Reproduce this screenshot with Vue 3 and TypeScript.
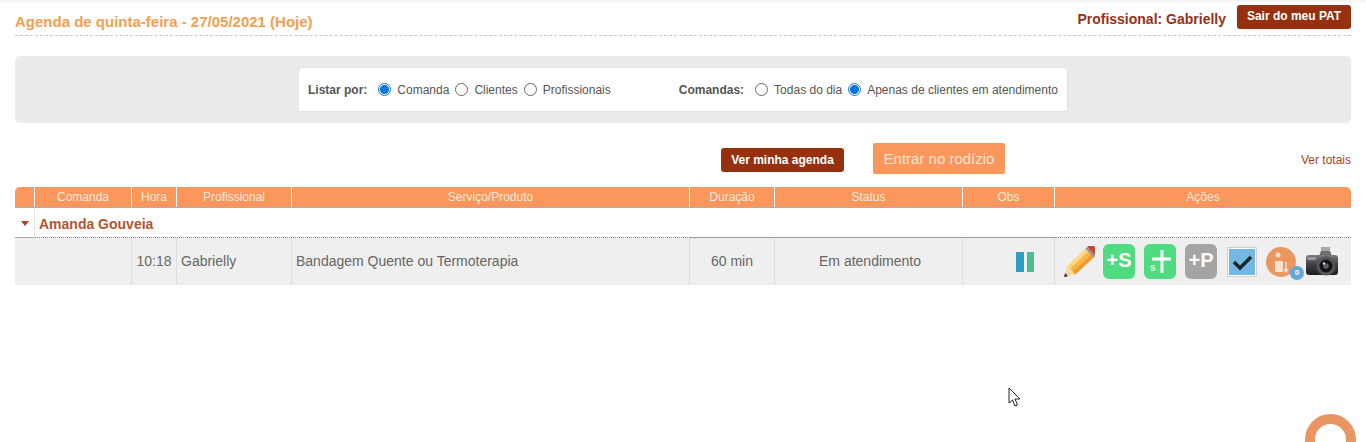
<script setup lang="ts">
const columns: string[] = ['', 'Comanda', 'Hora', 'Profissional', 'Serviço/Produto', 'Duração', 'Status', 'Obs', 'Ações']
</script>

<template>
  <div class="page">
    <header class="top">
      <h1>Agenda de quinta-feira - 27/05/2021 (Hoje)</h1>
      <div class="who">
        <span>Profissional: Gabrielly</span>
        <button class="btn-dark pat">Sair do meu PAT</button>
      </div>
    </header>

    <section class="panel">
      <div class="filters">
        <div class="group">
          <b>Listar por:</b>
          <label><i class="radio on"></i>Comanda</label>
          <label><i class="radio"></i>Clientes</label>
          <label><i class="radio"></i>Profissionais</label>
        </div>
        <div class="group second">
          <b>Comandas:</b>
          <label><i class="radio"></i>Todas do dia</label>
          <label><i class="radio on"></i>Apenas de clientes em atendimento</label>
        </div>
      </div>
    </section>

    <section class="tools">
      <button class="btn-dark agenda">Ver minha agenda</button>
      <button class="btn-rodizio">Entrar no rodízio</button>
      <a class="totais">Ver totais</a>
    </section>

    <section class="table">
      <div class="row head">
        <div v-for="c in columns" :key="c" class="th">{{ c }}</div>
      </div>
      <div class="group-row">
        <div class="caret-cell"><i class="caret"></i></div>
        <div class="gname">Amanda Gouveia</div>
        <div class="solid"></div>
        <div class="dots"></div>
      </div>
      <div class="row body">
        <div class="wide"></div>
        <div class="td center">10:18</div>
        <div class="td">Gabrielly</div>
        <div class="td">Bandagem Quente ou Termoterapia</div>
        <div class="td center">60 min</div>
        <div class="td center status">Em atendimento</div>
        <div class="td obs">
          <svg width="18" height="20" viewBox="0 0 18 20">
            <rect x="0" y="0" width="8" height="20" fill="#2e9fc4" />
            <rect x="11" y="0" width="7" height="20" fill="#4dbd93" />
          </svg>
        </div>
        <div class="td actions">
          <svg class="pencil" width="32" height="32" viewBox="0 0 32 32">
            <g transform="translate(1 31) rotate(-43)">
              <path d="M0 0 L10 -6 V6 Z" fill="#f6d9a8" />
              <path d="M0 0 L3.500 -2.100 V2.100 Z" fill="#3a3230" />
              <rect x="10" y="-6" width="25" height="4" fill="#ffd684" />
              <rect x="10" y="-2" width="25" height="4" fill="#fbb440" />
              <rect x="10" y="2" width="25" height="4" fill="#ee9a2e" />
              <rect x="35" y="-6" width="2.500" height="12" fill="#9b8f86" />
              <path d="M37.500 -6 H39 Q43 -6 43 -2 V2 Q43 6 39 6 H37.500 Z" fill="#c6492f" />
            </g>
          </svg>
          <span class="tile green">+S</span>
          <span class="tile green plus">
            <svg width="32" height="35" viewBox="0 0 32 35">
              <path d="M18 6 V29 M8 15 H27" stroke="#fff" stroke-width="3" fill="none" />
            </svg>
            <small>s</small>
          </span>
          <span class="tile gray">+P</span>
          <span class="check">
            <svg width="26" height="26" viewBox="0 0 26 26">
              <rect x="0" y="0" width="26" height="26" fill="#72b8e2" />
              <path d="M5 13 L11 19 L22 8" stroke="#1c2530" stroke-width="3.500" fill="none" />
            </svg>
          </span>
          <span class="person">
            <svg width="30" height="30" viewBox="0 0 30 30">
              <circle cx="15" cy="15" r="15" fill="#ec965f" />
              <circle cx="12" cy="8" r="2.500" fill="#f8e2d2" />
              <rect x="9" y="14" width="8" height="11" rx="1" fill="#f8e2d2" />
              <path d="M20 15 V24 M18 22 L20 25 L22 22" stroke="#f8e2d2" stroke-width="1.500" fill="none" />
            </svg>
            <em>0</em>
          </span>
          <svg class="camera" width="32" height="30" viewBox="0 0 32 30">
            <defs>
              <linearGradient id="cam" x1="0" y1="0" x2="0" y2="1">
                <stop offset="0" stop-color="#7c7c80" />
                <stop offset="0.500" stop-color="#3e3e42" />
                <stop offset="1" stop-color="#1f1f22" />
              </linearGradient>
            </defs>
            <rect x="15" y="0" width="9" height="4" fill="#a8a8a8" />
            <path d="M13 9 L15 4 H24 L26 9 Z" fill="#6e6e72" />
            <path d="M0 11 Q0 8 3 8 H29 Q32 8 32 11 V25 Q32 28 29 28 H3 Q0 28 0 25 Z" fill="url(#cam)" />
            <rect x="1" y="10" width="9" height="3" rx="1" fill="#99999c" />
            <circle cx="20" cy="19" r="9.500" fill="#55555a" />
            <circle cx="20" cy="19" r="6.500" fill="#141416" />
            <circle cx="20" cy="19" r="2.800" fill="#5e5e63" />
            <circle cx="18" cy="16.500" r="1.200" fill="#d8d8d8" />
          </svg>
        </div>
      </div>
    </section>

    <svg class="cursor" width="14" height="20" viewBox="0 0 14 20">
      <path d="M1 1 V16 L4.500 13 L7 19 L9.500 18 L7 12 L12 12 Z" fill="#fff" stroke="#222" stroke-width="1" />
    </svg>
    <div class="ring"></div>
  </div>
</template>

<style>
html, body { background: #fff; overflow: hidden; }
</style>

<style scoped>
.page {
  position: relative;
  height: 442px;
  box-sizing: border-box;
  padding: 0 15px;
  overflow: hidden;
  font-family: "Liberation Sans", Arial, sans-serif;
  font-size: 12px;
  color: #555;
  border-top: 2px solid #f6f6f6;
}
.top {
  height: 34px;
  box-sizing: border-box;
  border-bottom: 1px dashed #c8c8c8;
  display: flex;
  justify-content: space-between;
  align-items: flex-start;
}
h1 {
  margin: 11px 0 0;
  font-size: 15px;
  line-height: 17px;
  font-weight: 700;
  color: #f2a04f;
}
.who {
  display: flex;
  align-items: flex-start;
  gap: 11px;
  font-size: 14px;
  font-weight: 700;
  color: #96301a;
}
.who span { margin-top: 9px; line-height: 17px; }
button { border: 0; font-family: inherit; padding: 0; }
.btn-dark {
  background: #96300f;
  color: #fff;
  font-weight: 700;
  font-size: 12px;
  border-radius: 3px;
}
.pat { margin-top: 3px; width: 114px; height: 24px; line-height: 22px; padding-bottom: 2px; }
.panel {
  margin-top: 20px;
  height: 67px;
  background: #ebebeb;
  border-radius: 5px;
  display: flex;
  justify-content: center;
  padding: 11px 283px 0;
  box-sizing: border-box;
}
.filters {
  width: 770px;
  height: 45px;
  box-sizing: border-box;
  background: #fff;
  border: 1px solid #e2e2e2;
  border-radius: 3px;
  display: flex;
  align-items: center;
  padding: 0 9px;
  font-size: 12px;
  color: #555;
}
.group { display: flex; align-items: center; }
.second { margin-left: 68px; }
.group b { color: #555; margin-right: 11px; }
.group label { display: flex; align-items: center; margin-right: 6px; }
.group label:last-child { margin-right: 0; }
.radio {
  width: 13px;
  height: 13px;
  box-sizing: border-box;
  border: 1px solid #666;
  border-radius: 50%;
  margin-right: 6px;
  background: #fff;
}
.radio.on {
  border: 1px solid #0b76e0;
  background: radial-gradient(circle, #0b76e0 0 4.200px, #fff 4.800px);
}
.tools {
  height: 64px;
  display: flex;
  align-items: flex-start;
}
.agenda { margin: 25px 0 0 706px; width: 123px; height: 24px; }
.btn-rodizio {
  margin: 20px 0 0 29px;
  width: 132px;
  height: 31px;
  background: #fb965c;
  color: #fbe5d5;
  font-size: 15px;
  border-radius: 2px;
}
.totais {
  margin: 29px 0 0 auto;
  color: #a8431f;
  font-size: 12px;
  line-height: 16px;
}
.row {
  display: grid;
  grid-template-columns: 19px 96px 44px 114px 397px 84px 187px 91px 1fr;
  column-gap: 1px;
}
.head {
  height: 20px;
  background: #fff;
  border-radius: 5px 5px 0 0;
  overflow: hidden;
  border-bottom: 1px solid #aeaeae;
}
.th {
  background: #fb965c;
  color: #fbe8da;
  text-align: center;
  font-size: 12px;
  line-height: 20px;
}
.group-row {
  height: 30px;
  display: flex;
  box-sizing: border-box;
}
.caret-cell {
  width: 19px;
  border-right: 1px solid #e5e5e5;
  border-bottom: 1px solid #a9a9a9;
  display: flex;
  align-items: center;
  justify-content: center;
}
.caret {
  width: 0;
  height: 0;
  border: 4.500px solid transparent;
  border-top: 5px solid #b5421f;
  border-bottom: 0;
  margin-top: 1px;
}
.gname {
  width: 651px;
  padding-left: 4px;
  font-size: 14px;
  font-weight: 700;
  line-height: 32px;
  color: #b25430;
  border-bottom: 1px dotted #888;
}
.solid {
  width: 365px;
  border-bottom: 1px solid #999;
}
.dots {
  flex: 1;
  border-bottom: 1px dotted #888;
}
.body {
  height: 47px;
  background: #efefef;
  column-gap: 0;
  grid-template-columns: 116px 45px 115px 398px 85px 188px 92px 1fr;
}
.td {
  border-left: 1px solid #dcdcdc;
  font-size: 14px;
  line-height: 47px;
  padding-left: 4px;
  color: #666;
}
.center { text-align: center; padding-left: 0; }
.status { padding-left: 3px; }
.obs { display: flex; align-items: center; justify-content: flex-end; padding-right: 20px; }
.actions {
  display: flex;
  align-items: center;
  padding-left: 8px;
}
.pencil { margin-right: 8px; flex: none; }
.tile {
  width: 32px;
  height: 35px;
  border-radius: 6px;
  color: #fff;
  font-weight: 700;
  font-size: 20px;
  line-height: 32px;
  text-align: center;
  margin-right: 9px;
  flex: none;
  position: relative;
}
.green { background: #4fdc80; }
.gray { background: #a4a4a4; }
.plus svg { display: block; }
.plus small {
  position: absolute;
  left: 6px;
  top: 19px;
  font-size: 10px;
  line-height: 10px;
  color: #d8f8e2;
}
.check {
  width: 30px;
  height: 30px;
  box-sizing: border-box;
  border: 2px solid #fff;
  outline: 1px solid #d0d0d0;
  outline-offset: -1px;
  margin-left: 1px;
  margin-right: 9px;
  flex: none;
  margin-top: 1px;
}
.check svg { display: block; }
.person { position: relative; width: 30px; height: 30px; margin-right: 10px; flex: none; }
.person svg { display: block; }
.person em {
  position: absolute;
  right: -8px;
  bottom: -3px;
  width: 14px;
  height: 14px;
  border-radius: 50%;
  background: #62a8dc;
  color: #fff;
  font-style: normal;
  font-weight: 700;
  font-size: 8px;
  line-height: 14px;
  text-align: center;
}
.camera { flex: none; margin-top: 1px; }
.cursor { position: absolute; left: 1008px; top: 385px; }
.ring {
  position: absolute;
  left: 1305px;
  top: 412px;
  width: 51px;
  height: 51px;
  box-sizing: border-box;
  border: 10px solid #ea9664;
  border-radius: 50%;
}
</style>
